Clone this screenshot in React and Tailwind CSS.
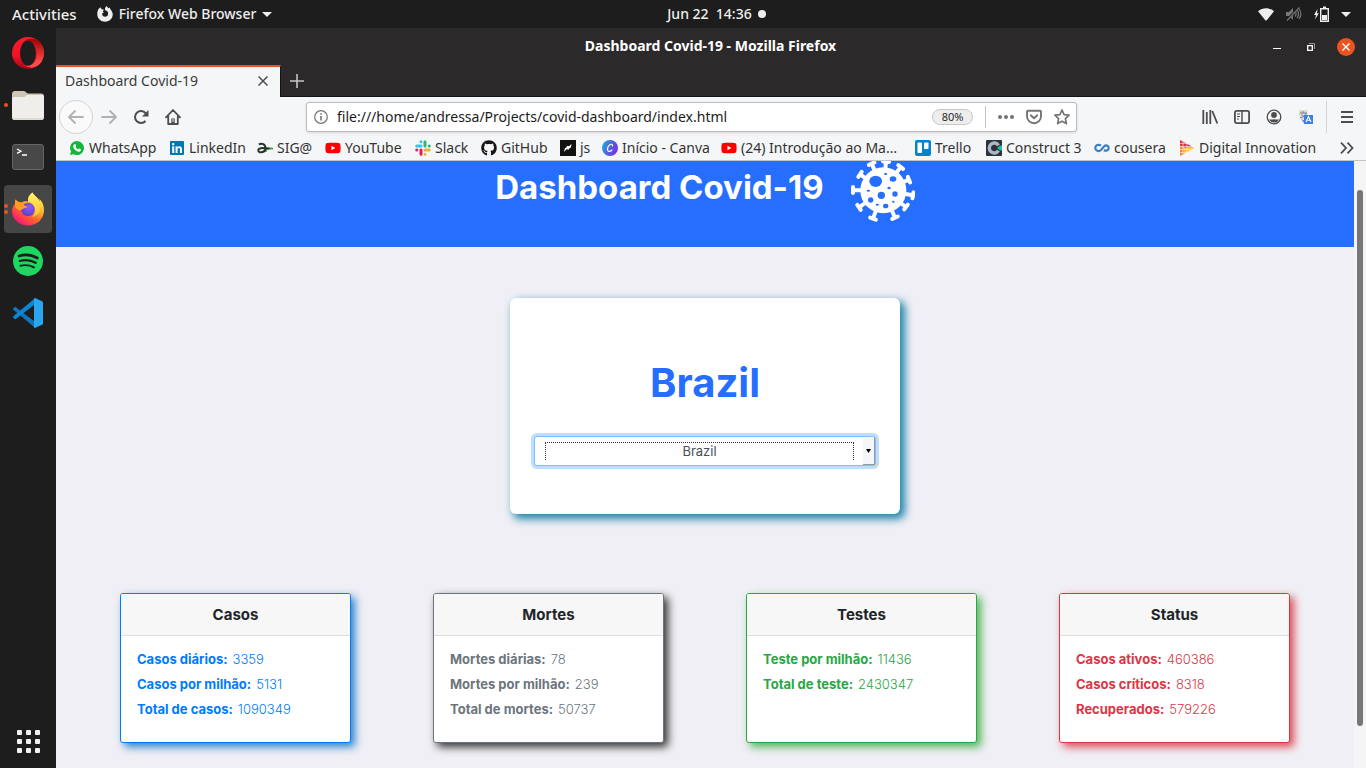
import React from "react";
import { FaLinkedin, FaYoutube, FaGithub } from "react-icons/fa";

/* ---------- dock icons ---------- */
const Opera = () => (
  <svg viewBox="0 0 32 32" className="size-8">
    <defs>
      <linearGradient id="op1" x1="0" y1="0" x2="0" y2="1">
        <stop offset="0" stopColor="#ff1b2d" />
        <stop offset="0.6" stopColor="#f01226" />
        <stop offset="1" stopColor="#a70014" />
      </linearGradient>
      <linearGradient id="op2" x1="0" y1="0" x2="0" y2="1">
        <stop offset="0" stopColor="#9c0000" />
        <stop offset="0.8" stopColor="#ff4b4b" />
      </linearGradient>
    </defs>
    <ellipse cx="16" cy="16" rx="16" ry="16" fill="url(#op1)" />
    <path d="M10.7 5.5C12.500 4 14 3.400 16 3.400c5 0 9.200 5.600 9.200 12.600S21 28.600 16 28.600c-2 0-3.800-.8-5.300-2.300 2.400 2.700 5.500 4.400 9 4.400C27 30 32 23.500 32 16S27 2 19.700 1.800c-3.500 0-6.600 1.200-9 3.700z" fill="url(#op2)" />
    <ellipse cx="16" cy="16" rx="8" ry="12.600" fill="#1d1d1d" />
  </svg>
);
const Files = () => (
  <svg viewBox="0 0 32 32" className="size-8">
    <path d="M0 5a3 3 0 0 1 3-3h9c2 0 2 2.500 4 2.500h13a3 3 0 0 1 3 3V14H0z" fill="#cdc6b4" />
    <path d="M0 10a2 2 0 0 1 2-2h10c2 0 2-2 4-2h14a2 2 0 0 1 2 2v20a3 3 0 0 1-3 3H3a3 3 0 0 1-3-3z" fill="#f0eeea" />
    <path d="M0 27v1a3 3 0 0 0 3 3h26a3 3 0 0 0 3-3v-1a2 2 0 0 1-2 2H2a2 2 0 0 1-2-2z" fill="#dedbd4" />
  </svg>
);
const Terminal = () => (
  <svg viewBox="0 0 32 32" className="size-8">
    <rect x="0.500" y="3.500" width="31" height="25" rx="2.500" fill="#484848" stroke="#656565" />
    <path d="M5 8l4 2.200L5 12.400M10 14h5" fill="none" stroke="#fff" strokeWidth="1.300" />
  </svg>
);
const Firefox = () => (
  <svg viewBox="0 0 32 34" className="h-[34px] w-8">
    <defs>
      <linearGradient id="ff1" x1="0.850" y1="0.050" x2="0.200" y2="0.950">
        <stop offset="0" stopColor="#fff44f" />
        <stop offset="0.350" stopColor="#ffb52d" />
        <stop offset="0.600" stopColor="#ff6a2a" />
        <stop offset="0.850" stopColor="#ff3355" />
        <stop offset="1" stopColor="#e31587" />
      </linearGradient>
      <radialGradient id="ff2" cx="0.600" cy="0.350" r="0.700">
        <stop offset="0" stopColor="#9059ff" />
        <stop offset="1" stopColor="#5b3fc0" />
      </radialGradient>
      <linearGradient id="ff3" x1="0" y1="0" x2="0" y2="1">
        <stop offset="0" stopColor="#fff36b" />
        <stop offset="1" stopColor="#ffbf2c" />
      </linearGradient>
    </defs>
    <path d="M3.400 7.500C3 9 3 10 3.200 11.300 1 14 0 16.500 0 19c0 8.300 7 14.500 16 14.500S32 27 32 18c0-5-2-9-5-11.500.8 1.600 1 2.500 1 3.500C26 5 22 4 20.500.5 17 3 15.500 6 16 9.500c-2-.5-4.500 0-6.300 1C7.500 10.300 5 9.500 3.400 7.500z" fill="url(#ff1)" />
    <path d="M20.500.5C17 3 15.500 6 16 9.500c4 .8 7 4 7 8.500 0 3-1 5-3 7 7-1 10-7 8-15C26 5 22 4 20.500.5z" fill="url(#ff3)" />
    <circle cx="16" cy="17.500" r="6.800" fill="url(#ff2)" />
    <path d="M3.400 7.500C3 9 3 10 3.200 11.300 2 14 4 19 9.300 18c1-2 5-1.500 6.300-3.600-2-.4-4-1-4.200-2.500 0-1 1.500-2 2.600-2.300-2-.2-3 .2-4.300.9C7.500 10.300 5 9.500 3.400 7.500z" fill="#ff9a2e" />
  </svg>
);
const Spotify = () => (
  <svg viewBox="0 0 30 30" className="size-[30px]">
    <circle cx="15" cy="15" r="15" fill="#1ed760" />
    <g fill="none" stroke="#1d1d1d" strokeLinecap="round">
      <path d="M6 10c6-1.700 13-1 18.300 2" strokeWidth="2.700" />
      <path d="M6.700 15c5.500-1.500 11.300-.9 16 1.800" strokeWidth="2.200" />
      <path d="M7.400 19.700c4.800-1.100 9.500-.6 13.600 1.700" strokeWidth="1.900" />
    </g>
  </svg>
);
const Code = () => (
  <svg viewBox="0 0 30 30" className="size-[30px]">
    <path d="M0 10.500 2.200 8.700 22.300 24v6L.3 11.700z" fill="#1074bd" />
    <path d="M0 19.500l2.200 1.900L22.300 6V0L.3 18.300z" fill="#0a86d4" />
    <path d="M22 0l7 3.200c.6.300 1 .8 1 1.500v20.600c0 .7-.4 1.200-1 1.500L22 30c-.8-.3-1-.7-1-1.500v-27C21 .7 21.200.3 22 0z" fill="#2aa5ef" />
  </svg>
);

const Dock = () => {
  const apps = [
    ["Opera", Opera, 0],
    ["Files", Files, 1],
    ["Terminal", Terminal, 0],
    ["Firefox", Firefox, 2],
    ["Spotify", Spotify, 0],
    ["Visual Studio Code", Code, 0],
  ];
  return (
    <nav className="flex w-14 shrink-0 flex-col items-center justify-between bg-[#1d1d1d] pt-px pb-[11px]">
      <div className="flex flex-col gap-1">
        {apps.map(([name, Icon, dots]) => (
          <button
            key={name}
            aria-label={name}
            className={
              "relative flex size-12 items-center justify-center rounded " +
              (dots === 2 ? "bg-[#464646]" : "")
            }
          >
            <Icon />
            {dots > 0 && (
              <span className="absolute left-0 flex flex-col gap-0.5">
                <span className="size-1 rounded-full bg-[#e95420]" />
                {dots === 2 && <span className="size-1 rounded-full bg-[#e95420]" />}
              </span>
            )}
          </button>
        ))}
      </div>
      <button aria-label="Show Applications" className="grid grid-cols-3 gap-1 p-1">
        {Array.from({ length: 9 }, (_, i) => (
          <span key={i} className="size-[5px] rounded-[1px] bg-[#f2f2f2]" />
        ))}
      </button>
    </nav>
  );
};

/* ---------- desktop top bar ---------- */
const TopBar = () => (
  <header className="grid h-7 shrink-0 grid-cols-[1fr_auto_1fr] items-center bg-[#1d1d1d] pr-[15px] pl-3 text-[15px] font-medium text-[#eeeeee]">
    <div className="flex items-center gap-5">
      <button>Activities</button>
      <button className="flex items-center gap-1.5">
        <svg viewBox="0 0 16 16" className="size-4" fill="#eee">
          <path d="M1.300 3.300 3.400 1.200l1.300 2L7 3.700 5.800 5.400l1 1.200-1.500.7-.1 1.400c.5 1.300 1.500 2 2.900 2 1.800 0 3.100-1.300 3-3.200C11 5.400 9.600 4.400 8 4.300 7.800 2.500 8.300 1 9.800 0c.3 1 1 1.600 2 2.200l1-.7c.2 1.300 1 2 1.700 3.200l1.200 2.800c.5 4.600-3 8.300-7.500 8.300C3.700 15.800.3 12.500.3 8.300c0-2 .4-3.500 1-5z" />
        </svg>
        <span className="text-sm">Firefox Web Browser</span>
        <svg viewBox="0 0 10 5" className="h-[5px] w-2.5" fill="#eee"><path d="M0 0h10L5 5z" /></svg>
      </button>
    </div>
    <div className="flex items-center gap-1.5 pl-[70px] text-sm">
      <span className="whitespace-pre">Jun 22  14:36</span>
      <span className="size-2 rounded-full bg-[#eee]" />
    </div>
    <div className="flex items-center justify-end gap-3">
      <svg viewBox="0 0 16 13" className="h-[13px] w-4" fill="#eee"><path d="M0 3.200C4.500-.9 11.500-.9 16 3.200L8.500 12.500h-1z" /></svg>
      <svg viewBox="0 0 16 14" className="h-3.5 w-4" fill="none" stroke="#777">
        <path d="M0 5h3l4-4v12L3 9H0z" fill="#777" stroke="none" />
        <path d="M9 4.500c1.300 1.500 1.300 3.500 0 5M11 3c2 2.500 2 5.500 0 8M13 2c2.300 3 2.300 7 0 10" strokeWidth="1.200" />
        <path d="M.5 13.500 13 .5" stroke="#1d1d1d" strokeWidth="2.500" />
        <path d="M1 13.500 13.500.5" strokeWidth="1.200" />
      </svg>
      <svg viewBox="0 0 15 16" className="h-4 w-[15px]">
        <path d="M3.500 3 0 9h2L1 13.500 4.800 7.300H3z" fill="#eee" />
        <path d="M6.700 2.700h7.600v12.600H6.700zM9 1.200h3" fill="none" stroke="#eee" strokeWidth="1.400" />
        <path d="M8 9h5v5H8z" fill="#eee" />
      </svg>
      <svg viewBox="0 0 10 5" className="h-[5px] w-2.5" fill="#eee"><path d="M0 0h10L5 5z" /></svg>
    </div>
  </header>
);

/* ---------- browser chrome ---------- */
const TitleBar = () => (
  <div className="grid h-[37px] shrink-0 grid-cols-[1fr_auto_1fr] items-center bg-[#2c292a] pr-[11px] pl-2.5">
    <span />
    <h2 className="pb-0.5 text-sm font-bold text-white">Dashboard Covid-19 - Mozilla Firefox</h2>
    <div className="flex items-center justify-end gap-[26px]">
      <button aria-label="Minimize" className="mt-1 h-px w-2 bg-white" />
      <button aria-label="Restore">
        <svg viewBox="0 0 8 8" className="size-2" fill="none">
          <path d="M2 .5h5.500V6" stroke="#999" />
          <path d="M.7 2.700h4.600v4.600H.7z" stroke="#fff" strokeWidth="1.300" />
        </svg>
      </button>
      <button aria-label="Close" className="-ml-1 flex size-[18px] items-center justify-center rounded-full bg-[#e95420]">
        <svg viewBox="0 0 8 8" className="size-2" stroke="#fff" strokeWidth="1.400"><path d="M.5.5l7 7M7.500.5l-7 7" /></svg>
      </button>
    </div>
  </div>
);
const TabStrip = () => (
  <div className="flex h-8 shrink-0 bg-[#2c292a]">
    <div className="flex w-[225px] items-center justify-between border-t-2 border-r border-t-[#e95420] border-r-[#151515] bg-[#f5f6f7] pr-3 pb-0.5 pl-[9px] text-sm text-[#3b3b3b]">
      <span>Dashboard Covid-19</span>
      <button aria-label="Close tab">
        <svg viewBox="0 0 10 10" className="size-2.5" stroke="#4d4d4d" strokeWidth="1.500"><path d="M.5.5l9 9M9.500.5l-9 9" /></svg>
      </button>
    </div>
    <div className="flex flex-1 items-center border-b border-[#151515] pl-[9px]">
      <button aria-label="New tab">
        <svg viewBox="0 0 14 14" className="size-3.5" stroke="#c4c4c4" strokeWidth="1.600"><path d="M7 0v14M0 7h14" /></svg>
      </button>
    </div>
  </div>
);

const NavBar = () => (
  <div className="flex h-10 shrink-0 items-center bg-[#f5f6f7]">
    <div className="flex items-center gap-4 pl-[3px]">
      <button aria-label="Back" className="-mr-2 flex size-[34px] items-center justify-center rounded-full border border-[#d4d4d4] bg-[#fafafa]">
        <svg viewBox="0 0 16 16" className="size-4" fill="none" stroke="#b1b1b1" strokeWidth="1.800" strokeLinecap="round" strokeLinejoin="round"><path d="M15 8H1.500M7 2 1 8l6 6" /></svg>
      </button>
      <button aria-label="Forward">
        <svg viewBox="0 0 16 16" className="size-4" fill="none" stroke="#b1b1b1" strokeWidth="1.800" strokeLinecap="round" strokeLinejoin="round"><path d="M1 8h13.500M9 2l6 6-6 6" /></svg>
      </button>
      <button aria-label="Reload">
        <svg viewBox="0 0 16 16" className="size-4" fill="none" stroke="#4d4d4d" strokeWidth="2"><path d="M12.500 12a6 6 0 1 1 0-8l1.500 2" /><path d="M15.500 1v6.500H9z" fill="#4d4d4d" stroke="none" /></svg>
      </button>
      <button aria-label="Home">
        <svg viewBox="0 0 16 16" className="size-4" fill="none" stroke="#4d4d4d" strokeWidth="1.800" strokeLinecap="round" strokeLinejoin="round"><path d="M1 8.300 8 1l7 7.300M3.200 7.500V15h9.600V7.500" /><path d="M6.300 15V9.500h3.400V15z" fill="#4d4d4d" stroke="none" /><path d="M8 10.500v2" stroke="#f5f6f7" strokeWidth="1" /></svg>
      </button>
    </div>
    <div className="ml-[125px] flex h-[30px] min-w-0 max-w-[771px] flex-1 items-center rounded-[3px] border border-[#babac0] bg-white px-1.5 shadow-sm">
      <svg viewBox="0 0 14 14" className="ml-px size-3.5 shrink-0" fill="none" stroke="#737373" strokeWidth="1.200"><circle cx="7" cy="7" r="6.300" /><path d="M7 6v4.500M7 3.300v1.400" strokeWidth="1.600" /></svg>
      <input
        aria-label="Address"
        className="ml-[9px] min-w-0 flex-1 bg-transparent text-sm text-[#1c1c1c] outline-none"
        defaultValue="file:///home/andressa/Projects/covid-dashboard/index.html"
      />
      <button className="h-4 w-[41px] rounded-full border border-[#c8c8c8] bg-[#ededed] text-[11px] leading-3 text-[#2c2c2c]">80%</button>
      <span className="mx-3 h-[22px] w-px bg-[#c4c4c4]" />
      <div className="flex items-center gap-3">
        <svg viewBox="0 0 16 4" className="h-1 w-4" fill="#737373"><circle cx="2" cy="2" r="2" /><circle cx="8" cy="2" r="2" /><circle cx="14" cy="2" r="2" /></svg>
        <svg viewBox="0 0 16 16" className="size-4" fill="none" stroke="#737373" strokeWidth="1.900" strokeLinecap="round" strokeLinejoin="round"><path d="M2 1.700h12a1 1 0 0 1 1 1v4.500a7 7 0 0 1-14 0V2.700a1 1 0 0 1 1-1z" /><path d="M4.800 6.300 8 9.300l3.200-3" /></svg>
        <svg viewBox="0 0 16 16" className="size-4" fill="none" stroke="#737373" strokeWidth="1.700" strokeLinejoin="round"><path d="M8 1l2.100 4.600 5 .6-3.700 3.400 1 5L8 12.200l-4.400 2.400 1-5L.9 6.200l5-.6z" /></svg>
      </div>
    </div>
    <div className="ml-auto flex items-center gap-4 pr-[13px]">
      <button aria-label="Library">
        <svg viewBox="0 0 16 14" className="h-3.5 w-4" stroke="#4d4d4d" strokeWidth="1.800"><path d="M1.300 0v14M4.800 2v12M8.300 0v14M10.300 1l5 12.500" /></svg>
      </button>
      <button aria-label="Sidebars">
        <svg viewBox="0 0 16 14" className="h-3.5 w-4" fill="none" stroke="#4d4d4d" strokeWidth="1.800"><rect x="0.900" y="0.900" width="14.200" height="12.200" rx="1.800" /><path d="M8 1v12" strokeWidth="1.400" /><path d="M3 4h3M3 6.500h3M3 9h2" strokeWidth="1" /></svg>
      </button>
      <button aria-label="Account">
        <svg viewBox="0 0 16 16" className="size-4" fill="none" stroke="#4d4d4d" strokeWidth="1.300"><circle cx="8" cy="8" r="6.800" /><circle cx="8" cy="6" r="2.900" fill="#4d4d4d" stroke="none" /><path d="M3 10c1.500 1 3 .2 5 .2s3.500.8 5-.2a5.300 5.300 0 0 1-10 0z" fill="#4d4d4d" stroke="none" /></svg>
      </button>
      <button aria-label="Translate">
        <svg viewBox="0 0 16 16" className="size-4" fill="none">
          <path d="M1 1h8l2 9H3L1 7z" fill="#dcdcd4" />
          <path d="M2 4h7M5 2v2M8 4c-1 3-3 4-6 5M3.500 5.500 7 8.500" stroke="#7a8290" />
          <path d="M3 10l3 4 2-2" fill="#4d8df5" />
          <path d="M6 6h9v9H6z" fill="#3b7ded" />
          <path d="M8 13l2.500-5.500L13 13M9 11.300h3" stroke="#fff" strokeWidth="1.100" />
        </svg>
      </button>
      <span className="-ml-1 -mr-0.5 h-8 w-px bg-[#d4d4d6]" />
      <button aria-label="Menu">
        <svg viewBox="0 0 12 12" className="size-3" stroke="#4d4d4d" strokeWidth="2"><path d="M0 1h12M0 6h12M0 11h12" /></svg>
      </button>
    </div>
  </div>
);

/* ---------- bookmarks ---------- */
const Whatsapp = () => (
  <svg viewBox="0 0 14 14" className="size-3.5">
    <path d="M7 0a7 7 0 1 1-3.300 13.200L0 14l1-3.500A7 7 0 0 1 7 0z" fill="#12b73c" />
    <path d="M4.500 3.200c.5-.3.900-.2 1.100.3l.5 1.200c.1.500-.3.800-.6 1.200.6 1.200 1.500 2 2.700 2.500.4-.4.700-1 1.200-.8l1.300.7c.4.3.3.7.1 1.200-.4 1-1.500 1.400-2.500 1.200-2.500-.6-4.200-2.300-5-4.500-.3-1.100.200-2.400 1.200-3z" fill="#fff" />
  </svg>
);
const Sigaa = () => (
  <svg viewBox="0 0 16 16" className="size-4" fill="none">
    <path d="M8 8.500h8" stroke="#3c9a3c" strokeWidth="1.800" />
    <path d="M1.800 4.300c3-1.300 6.700-.3 6.700 3.900v3.600M8.500 8.500C5.500 7.700 1.300 8 1.300 10.300c0 2.900 5.500 2.700 7.200-.8M8.500 8.500h4" stroke="#24372b" strokeWidth="2" />
  </svg>
);
const Slack = () => (
  <svg viewBox="0 0 16 16" className="size-4" strokeWidth="3" strokeLinecap="round">
    <path d="M6 1.700v.1M6 6H1.700" stroke="#36c5f0" />
    <path d="M10 6V1.700M14.300 6h-.1" stroke="#2eb67d" />
    <path d="M6 10v4.300M1.700 10h.1" stroke="#e01e5a" />
    <path d="M10 10h4.300M10 14.300v-.1" stroke="#ecb22e" />
  </svg>
);
const Js = () => (
  <svg viewBox="0 0 16 16" className="size-4"><path d="M0 0h16v16H0z" fill="#111" /><path d="M4 12l1-4 1.500-.5L7 6l2 .3L11.500 4 11 7.500 9.500 8 9 9.500 6.500 9.200z" fill="#fff" /></svg>
);
const Canva = () => (
  <svg viewBox="0 0 16 16" className="size-4">
    <defs><linearGradient id="cv" x1="0" y1="0.300" x2="1" y2="0.700"><stop offset="0" stopColor="#27a5dc" /><stop offset="0.500" stopColor="#4f62dc" /><stop offset="1" stopColor="#7d2ae8" /></linearGradient></defs>
    <circle cx="8" cy="8" r="8" fill="url(#cv)" />
    <path d="M10.500 6.300c.3-1.500-.6-2.300-1.700-2C6.500 5 5 8 5.700 10.200c.7 1.800 3 1.700 4.500-.5" fill="none" stroke="#fff" strokeWidth="1.200" />
  </svg>
);
const Trello = () => (
  <svg viewBox="0 0 16 16" className="size-4"><rect width="16" height="16" rx="2" fill="#0483d1" /><rect x="2.500" y="2.500" width="4.500" height="10.500" rx="0.800" fill="#fff" /><rect x="9" y="2.500" width="4.500" height="6.500" rx="0.800" fill="#fff" /></svg>
);
const Construct = () => (
  <svg viewBox="0 0 16 16" className="size-4"><rect width="16" height="16" rx="1" fill="#2d3338" /><path d="M12.500 5.300a5 5 0 1 0 0 5.400" fill="none" stroke="#a9b9c8" strokeWidth="3.400" /><path d="M11 8l3-2.500h2v5h-2z" fill="#1fbfa5" /></svg>
);
const Coursera = () => (
  <svg viewBox="0 0 16 16" className="size-4" fill="none" stroke="#3a7fc4" strokeWidth="2.200"><path d="M7 5.700C4.500 3.800 1.300 5.200 1.300 8S4.500 12 7 10l3-3.500c2-2 4.700-.8 4.700 1.500S12 11.500 10 10" /></svg>
);
const Digital = () => (
  <svg viewBox="0 0 16 16" className="size-4">
    <path d="M1 0v6l6 2 6-1.500z" fill="#e8303a" />
    <path d="M1 6v10l4-2V8z" fill="#f58a2a" />
    <path d="M5 14V8l8-1.500 2 1.500z" fill="#fbc52d" />
    <path d="M0 3.500h15M0 6.500h15M0 9.500h15M0 12.500h15M4 0v16M8 0v16" stroke="#f5f6f7" strokeWidth="0.600" />
  </svg>
);

const bookmarks = [
  ["WhatsApp", <Whatsapp />],
  ["LinkedIn", <FaLinkedin className="size-4 text-[#0077b5]" />],
  ["SIG@", <Sigaa />],
  ["YouTube", <FaYoutube className="size-4 text-[#ff0000]" />],
  ["Slack", <Slack />],
  ["GitHub", <FaGithub className="size-4 text-[#171515]" />],
  ["js", <Js />],
  ["Início - Canva", <Canva />],
  ["(24) Introdução ao Ma…", <FaYoutube className="size-4 text-[#ff0000]" />],
  ["Trello", <Trello />],
  ["Construct 3", <Construct />],
  ["cousera", <Coursera />],
  ["Digital Innovation", <Digital />],
];
const Bookmarks = () => (
  <div className="flex h-6 shrink-0 items-center justify-between border-b border-[#c0c4c9] bg-[#f5f6f7] pr-3 pb-0.5 pl-[13px] text-sm text-[#333]">
    <nav className="grid grid-cols-[100px_88px_68px_90px_66px_79px_42px_119px_194px_71px_108px_85px_137px] items-center">
      {bookmarks.map(([label, icon]) => (
        <a key={label} href="#" className="flex items-center gap-1 whitespace-nowrap">
          <span className="flex w-4 shrink-0 justify-center">{icon}</span>
          {label}
        </a>
      ))}
    </nav>
    <button aria-label="More bookmarks">
      <svg viewBox="0 0 14 12" className="h-3 w-3.5" fill="none" stroke="#4d4d4d" strokeWidth="1.800"><path d="M1 .7 6 6l-5 5.300M7.500.7l5 5.300-5 5.300" /></svg>
    </button>
  </div>
);

/* ---------- dashboard page ---------- */
const spikes = [[95, 26], [138, 20], [182, 36], [207, 74], [219, 121], [198, 156], [165, 188], [99, 191], [57, 157], [39, 105], [60, 58]];
const holes = [[107, 79, 19, 17], [159, 72, 10, 8], [124, 121, 11, 11], [165, 117, 8, 8], [92, 135, 8, 8], [137, 153, 8, 7], [137, 57, 5, 3], [147, 99, 5, 4], [85, 107, 5, 3], [160, 140, 4, 3], [112, 149, 5, 3]];
const Virus = () => (
  <svg viewBox="30 18 195 186" className="h-[62px] w-[65px] shrink-0">
    <circle cx="130" cy="106" r="69" fill="#fff" />
    {spikes.map(([x, y]) => {
      const dx = x - 130, dy = y - 106, n = Math.hypot(dx, dy);
      const px = (-dy / n) * 9, py = (dx / n) * 9;
      return (
        <path key={x} d={`M130 106L${x} ${y}M${x - px} ${y - py}L${x + px} ${y + py}`} stroke="#fff" strokeWidth="12" strokeLinecap="round" />
      );
    })}
    {holes.map(([x, y, rx, ry]) => (
      <ellipse key={x + "-" + y} cx={x} cy={y} rx={rx} ry={ry} fill="#266eff" />
    ))}
  </svg>
);

const cards = [
  { title: "Casos", tone: "border-[#007bff] text-[#007bff] shadow-[4px_4px_8px_#2a82cc]", rows: [["Casos diários:", "3359"], ["Casos por milhão:", "5131"], ["Total de casos:", "1090349"]] },
  { title: "Mortes", tone: "border-[#6c757d] text-[#6c757d] shadow-[4px_4px_8px_#333333]", rows: [["Mortes diárias:", "78"], ["Mortes por milhão:", "239"], ["Total de mortes:", "50737"]] },
  { title: "Testes", tone: "border-[#28a745] text-[#28a745] shadow-[4px_4px_8px_#4fb555]", rows: [["Teste por milhão:", "11436"], ["Total de teste:", "2430347"]] },
  { title: "Status", tone: "border-[#dc3545] text-[#dc3545] shadow-[4px_4px_8px_#dc4a55]", rows: [["Casos ativos:", "460386"], ["Casos críticos:", "8318"], ["Recuperados:", "579226"]] },
];
const StatCard = ({ title, tone, rows }) => (
  <section className={"h-[150px] overflow-hidden rounded-[3px] border bg-white " + tone}>
    <h3 className="border-b border-[#dfdfdf] bg-[#f7f7f7] py-2.5 text-center text-[15px] leading-[21px] font-bold text-[#212529]">{title}</h3>
    <dl className="px-4 pt-[11px] text-[13px] leading-[25px]">
      {rows.map(([k, v]) => (
        <div key={k} className="flex gap-[5px] whitespace-nowrap">
          <dt className="font-bold">{k}</dt>
          <dd className="font-light">{v}</dd>
        </div>
      ))}
    </dl>
  </section>
);

const Page = () => (
  <div className="flex min-h-0 flex-1">
    <main className="min-w-0 flex-1 overflow-hidden bg-[#f0eff5] font-['Inter',sans-serif]">
      <header className="flex h-[86px] items-start justify-center gap-[26px] bg-[#266eff]">
        <h1 className="pt-[5px] text-[33px] leading-[42px] font-bold text-white">Dashboard Covid-19</h1>
        <Virus />
      </header>
      <section className="mx-auto mt-[51px] flex h-[216px] w-[30%] flex-col rounded-md bg-white px-6 pt-[60px] shadow-[4px_4px_8px_1px_#1f84ab]">
        <h2 className="text-center text-[40px] leading-[50px] font-bold text-[#266eff]">Brazil</h2>
        <div className="mt-7 flex h-[30px] rounded-[3px] border border-[#80bdff] bg-white ring-3 ring-[#bfdeff]">
          <select
            aria-label="País"
            defaultValue="Brazil"
            className="mt-[5px] ml-2.5 h-[18px] min-w-0 flex-1 appearance-none border-x border-t border-dotted border-[#333] pb-0.5 text-center text-[13px] leading-4 text-[#495057] outline-none [text-align-last:center]"
          >
            <option>Brazil</option>
          </select>
          <span className="ml-[9px] flex w-3 items-center justify-center border-r border-b border-[#999] bg-[#f5f6f7]">
            <svg viewBox="0 0 5 4" className="h-1 w-[5px]"><path d="M0 0h5L2.500 4z" /></svg>
          </span>
        </div>
      </section>
      <div className="mt-[79px] grid grid-cols-4 gap-[82px] px-16">
        {cards.map((c) => <StatCard key={c.title} {...c} />)}
      </div>
    </main>
    <div className="w-3 shrink-0 bg-[#f5f5f5] px-[3px] pt-[29px]">
      <div className="h-[536px] rounded-full bg-[#777]" />
    </div>
  </div>
);

export default function App() {
  return (
    <div className="flex h-screen flex-col overflow-hidden font-['Noto_Sans',sans-serif]">
      <TopBar />
      <div className="flex min-h-0 flex-1">
        <Dock />
        <div className="flex min-w-0 flex-1 flex-col">
          <TitleBar />
          <TabStrip />
          <NavBar />
          <Bookmarks />
          <Page />
        </div>
      </div>
    </div>
  );
}
